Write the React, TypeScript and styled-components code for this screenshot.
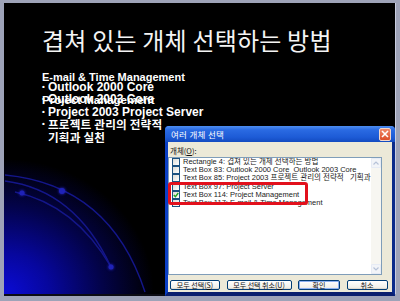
import styled, { createGlobalStyle } from 'styled-components';

const GlobalStyle = createGlobalStyle`
  html, body {
    margin: 0;
    padding: 0;
    background: #9ea3b8;
  }
  body {
    width: 400px;
    height: 301px;
    overflow: hidden;
    font-family: "Liberation Sans", "Noto Sans CJK KR", sans-serif;
  }
`;

const items = [
  { label: 'Rectangle 4: 겹쳐 있는 개체 선택하는 방법', checked: false },
  { label: 'Text Box 83: Outlook 2000 Core  Outlook 2003 Core', checked: false },
  { label: 'Text Box 85: Project 2003 프로젝트 관리의 전략적   기획과 실천', checked: false },
  { label: 'Text Box 97: Project Server', checked: false },
  { label: 'Text Box 114: Project Management', checked: true },
  { label: 'Text Box 117: E-mail & Time Management', checked: false },
];

const App = () => {
  return (
    <Stage>
      <GlobalStyle />
      <Slide>
        <Backdrop viewBox="0 0 391 291" width={391} height={291}>
          <path d="M1 172 Q106 182 141 289" />
          <path d="M1 178 Q71 187 107 264" />
          <path d="M11 189 Q71 202 107 264" />
          <circle cx={18} cy={190} r={2.5} />
          <circle cx={58} cy={188} r={3} />
          <circle cx={107} cy={264} r={2.5} />
        </Backdrop>
        <Title>겹쳐 있는 개체 선택하는 방법</Title>
        <Body>
          <BulletLayer>
            <Bullet>Outlook 2000 Core</Bullet>
            <Bullet>Outlook 2003 Core</Bullet>
            <Bullet>Project 2003 Project Server</Bullet>
            <Bullet $korean>
              프로젝트 관리의 전략적
              <br />
              기획과 실천
            </Bullet>
          </BulletLayer>
          <NoteLayer>
            <p>E-mail &amp; Time Management</p>
            <p>&nbsp;</p>
            <p>Project Management</p>
          </NoteLayer>
        </Body>
      </Slide>

      <Dialog>
        <TitleBar>
          <span>여러 개체 선택</span>
          <CloseButton>
            <svg width="8" height="8" viewBox="0 0 8 8">
              <path d="M1 1 L7 7 M7 1 L1 7" stroke="#fff" strokeWidth="1.6" />
            </svg>
          </CloseButton>
        </TitleBar>
        <DialogBody>
          <FieldLabel>
            개체(<u>O</u>):
          </FieldLabel>
          <ListBox>
            <ListRows>
              {items.map((item) => (
                <Row key={item.label}>
                  <CheckBox>
                    {item.checked && (
                      <svg width="6" height="6" viewBox="0 0 6 6">
                        <path d="M0.8 3 L2.4 4.7 L5.3 1" fill="none" stroke="#21a121" strokeWidth="1.4" />
                      </svg>
                    )}
                  </CheckBox>
                  <span>{item.label}</span>
                </Row>
              ))}
            </ListRows>
            <ScrollBar>
              <ScrollArrow>
                <svg width="6" height="4" viewBox="0 0 6 4">
                  <path d="M0.5 3.5 L3 1 L5.5 3.5" fill="none" stroke="#b6c2d8" strokeWidth="1.2" />
                </svg>
              </ScrollArrow>
              <ScrollTrack />
              <ScrollArrow>
                <svg width="6" height="4" viewBox="0 0 6 4">
                  <path d="M0.5 0.5 L3 3 L5.5 0.5" fill="none" stroke="#b6c2d8" strokeWidth="1.2" />
                </svg>
              </ScrollArrow>
            </ScrollBar>
            <Highlight />
          </ListBox>
          <ButtonRow>
            <PushButton $width={50}>
              모두 선택(<u>S</u>)
            </PushButton>
            <PushButton $width={65}>
              모두 선택 취소(<u>U</u>)
            </PushButton>
            <PushButton $width={42} $focused>
              확인
            </PushButton>
            <PushButton $width={41}>취소</PushButton>
          </ButtonRow>
        </DialogBody>
      </Dialog>
    </Stage>
  );
};

const Stage = styled.div`
  position: relative;
  width: 400px;
  height: 301px;
  padding: 3px 0 0 4px;
  box-sizing: border-box;
`;

const Slide = styled.div`
  position: relative;
  width: 391px;
  height: 291px;
  box-sizing: border-box;
  padding: 25px 0 0 38px;
  overflow: hidden;
  background:
    radial-gradient(ellipse 150px 135px at 0% 100%, #0b0bd6 0%, #07079e 30%, #03034a 65%, #000 100%),
    #000;
  box-shadow: 0 2px 0 #0c0c14, 1px 0 0 #c9cde0;
  color: #fff;
`;

const Backdrop = styled.svg`
  position: absolute;
  left: 0;
  top: 0;
  fill: #1f22b8;
  path {
    fill: none;
    stroke: #14168a;
    stroke-width: 1.4;
  }
  circle {
    filter: drop-shadow(0 0 1.5px #2a2ae0);
  }
`;

const Title = styled.h1`
  position: relative;
  margin: 0;
  font-family: "Noto Sans CJK KR", sans-serif;
  font-weight: 400;
  font-size: 24px;
  line-height: 24px;
  letter-spacing: 0.2px;
  color: #f4f4f4;
`;

const Body = styled.div`
  position: relative;
  display: grid;
  margin-top: 20px;
  font-weight: 700;

  & > * {
    grid-area: 1 / 1;
  }
`;

const BulletLayer = styled.ul`
  list-style: none;
  margin: 0;
  padding: 8.5px 0 0;
`;

const Bullet = styled.li<{ $korean?: boolean }>`
  position: relative;
  padding-left: 6px;
  font-family: ${(p) => (p.$korean ? '"Noto Sans CJK KR", sans-serif' : '"Liberation Sans", sans-serif')};
  font-size: ${(p) => (p.$korean ? '11.6px' : '12px')};
  line-height: 12.5px;
  letter-spacing: ${(p) => (p.$korean ? '0.2px' : '0')};

  &::before {
    content: '•';
    position: absolute;
    left: 0;
    top: 0;
    font-family: "Liberation Sans", sans-serif;
    font-size: 8px;
  }
`;

const NoteLayer = styled.div`
  font-family: "Liberation Sans", sans-serif;
  font-size: 11px;
  line-height: 11.5px;

  p {
    margin: 0;
  }
  p:last-child {
    font-size: 11.5px;
  }
`;

const Dialog = styled.div`
  position: absolute;
  left: 165px;
  top: 126px;
  width: 230px;
  height: 170px;
  box-sizing: border-box;
  display: flex;
  flex-direction: column;
  border: 3px solid #0b3fc4;
  border-top: 0;
  border-right-color: #0a2a8a;
  border-bottom: 4px solid #0a1f6e;
  border-radius: 4px 4px 0 0;
  background: #ece9d8;
  font-family: "Liberation Sans", "Noto Sans CJK KR", sans-serif;
  color: #111;
`;

const TitleBar = styled.div`
  height: 16px;
  margin: 0 -3px;
  padding: 0 4px 0 6px;
  display: flex;
  align-items: center;
  justify-content: space-between;
  border-radius: 4px 4px 0 0;
  background: linear-gradient(#4d8ef0 0%, #2a6ae2 25%, #1d5bd6 70%, #134bc0 100%);
  color: #fff;
  font-family: "Noto Sans CJK KR", sans-serif;
  font-size: 8.5px;
  letter-spacing: 0.3px;
`;

const CloseButton = styled.div`
  width: 10px;
  height: 11px;
  display: flex;
  align-items: center;
  justify-content: center;
  border: 1px solid #f4d8cc;
  border-radius: 2px;
  background: linear-gradient(#f08a6a, #dc4e2a);
`;

const DialogBody = styled.div`
  flex: 1;
  display: flex;
  flex-direction: column;
  padding: 4px 10px 0 0;
`;

const FieldLabel = styled.div`
  padding-left: 2px;
  font-family: "Noto Sans CJK KR", sans-serif;
  font-size: 7.5px;
  line-height: 10px;
  height: 11px;
`;

const ListBox = styled.div`
  position: relative;
  height: 116px;
  display: flex;
  border: 1px solid #7f9db9;
  background: #fff;
`;

const ListRows = styled.div`
  flex: 1;
  min-width: 0;
  overflow: hidden;
  padding: 0 0 0 3px;
`;

const Row = styled.div`
  display: flex;
  align-items: center;
  gap: 3px;
  height: 8.2px;
  white-space: pre;
  font-size: 7.5px;
  line-height: 8.2px;
  color: #222;
`;

const CheckBox = styled.span`
  flex: none;
  width: 6px;
  height: 6px;
  display: flex;
  align-items: center;
  justify-content: center;
  border: 1px solid #1c5180;
  background: linear-gradient(135deg, #dcdcd7, #fff);
`;

const ScrollBar = styled.div`
  flex: none;
  width: 10px;
  display: flex;
  flex-direction: column;
  background: #f7f6f1;
`;

const ScrollArrow = styled.div`
  height: 10px;
  display: flex;
  align-items: center;
  justify-content: center;
  box-sizing: border-box;
  border: 1px solid #e6ebf5;
  border-radius: 1px;
  background: #f2f4f8;
`;

const ScrollTrack = styled.div`
  flex: 1;
`;

const Highlight = styled.div`
  position: absolute;
  left: -1px;
  top: 24px;
  width: 140px;
  height: 23px;
  box-sizing: border-box;
  border: 3px solid #e2101c;
  border-radius: 3px;
`;

const ButtonRow = styled.div`
  display: flex;
  gap: 6.5px;
  padding: 5px 0 0 2px;
`;

const PushButton = styled.div<{ $width: number; $focused?: boolean }>`
  width: ${(p) => p.$width}px;
  height: 10px;
  flex: none;
  display: flex;
  align-items: center;
  justify-content: center;
  box-sizing: border-box;
  border: 1px solid #003c74;
  border-radius: 2px;
  background: linear-gradient(#fff, #f0f0ea 80%, #d6d0c5);
  box-shadow: ${(p) => (p.$focused ? 'inset 0 0 0 1px #8cb0f0' : 'none')};
  font-family: "Noto Sans CJK KR", sans-serif;
  font-size: 7px;
  line-height: 8px;
  white-space: nowrap;
  color: #111;

  u {
    text-underline-offset: 1px;
  }
`;

export default App;
